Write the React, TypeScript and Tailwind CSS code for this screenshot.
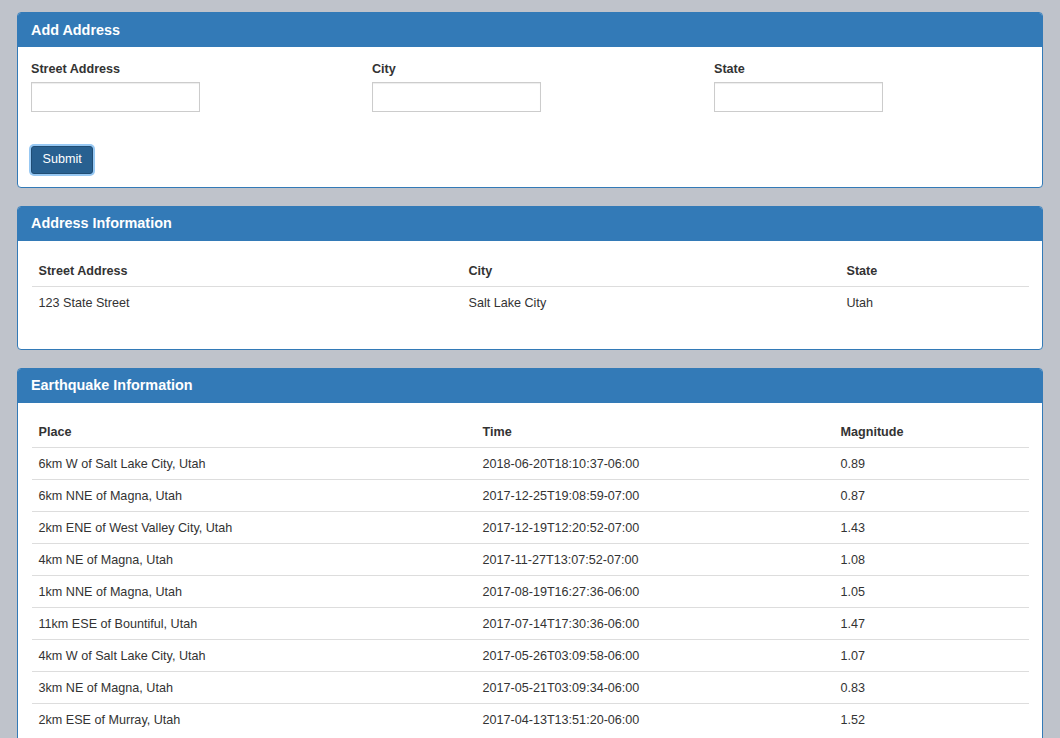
const addressCols = [
  { label: "Street Address", width: "w-[430px]" },
  { label: "City", width: "w-[378px]" },
  { label: "State", width: "" },
];

const quakeCols = [
  { label: "Place", width: "w-[444px]" },
  { label: "Time", width: "w-[358px]" },
  { label: "Magnitude", width: "" },
];

const quakes = [
  ["6km W of Salt Lake City, Utah", "2018-06-20T18:10:37-06:00", "0.89"],
  ["6km NNE of Magna, Utah", "2017-12-25T19:08:59-07:00", "0.87"],
  ["2km ENE of West Valley City, Utah", "2017-12-19T12:20:52-07:00", "1.43"],
  ["4km NE of Magna, Utah", "2017-11-27T13:07:52-07:00", "1.08"],
  ["1km NNE of Magna, Utah", "2017-08-19T16:27:36-06:00", "1.05"],
  ["11km ESE of Bountiful, Utah", "2017-07-14T17:30:36-06:00", "1.47"],
  ["4km W of Salt Lake City, Utah", "2017-05-26T03:09:58-06:00", "1.07"],
  ["3km NE of Magna, Utah", "2017-05-21T03:09:34-06:00", "0.83"],
  ["2km ESE of Murray, Utah", "2017-04-13T13:51:20-06:00", "1.52"],
];

const Panel = ({
  title,
  bodyClass = "p-[13px]",
  children,
}: {
  title: string;
  bodyClass?: string;
  children: React.ReactNode;
}) => (
  <div className="mb-[18px] rounded-[4px] border border-[#337ab7] bg-white">
    <div className="flex h-[34px] items-center rounded-t-[3px] bg-[#337ab7] px-[13px] pt-[1px] text-[14.4px] font-bold text-white">
      {title}
    </div>
    <div className={bodyClass}>{children}</div>
  </div>
);

const DataTable = ({
  cols,
  rows,
}: {
  cols: { label: string; width: string }[];
  rows: string[][];
}) => (
  <table className="mb-[18px] w-full border-collapse text-left text-[12.6px] leading-[18px] text-[#333]">
    <thead>
      <tr className="border-b border-[#ddd]">
        {cols.map((c) => (
          <th key={c.label} className={`px-[7px] py-[6.5px] font-bold ${c.width}`}>
            {c.label}
          </th>
        ))}
      </tr>
    </thead>
    <tbody>
      {rows.map((r, i) => (
        <tr key={i} className="border-b border-[#ddd] last:border-b-0">
          {r.map((cell, j) => (
            <td key={j} className="px-[7px] py-[6.5px]">
              {cell}
            </td>
          ))}
        </tr>
      ))}
    </tbody>
  </table>
);

export default function App() {
  return (
    <div
      className="min-h-screen bg-[#bfc3cb] px-[17px] pt-[12px] text-[#333]"
      style={{ fontFamily: '"Liberation Sans", Arial, sans-serif' }}
    >
      <Panel title="Add Address">
        <div className="grid grid-cols-[341px_342px_1fr]">
          {["Street Address", "City", "State"].map((l) => (
            <div key={l} className="mb-[13.5px] flex flex-col">
              <label className="mb-[4px] text-[12.6px] font-bold leading-[18px]">{l}</label>
              <input
                type="text"
                className="h-[30px] w-[169px] border border-[#ccc] bg-white px-2 text-[12.6px] shadow-[inset_0_1px_1px_rgba(0,0,0,0.075)] outline-none"
              />
            </div>
          ))}
        </div>
        <div className="pt-[20px]">
          <button className="h-[28px] rounded-[3px] border border-[#204d74] bg-[#286090] px-[10.5px] text-[12.6px] text-white shadow-[0_0_0_2px_#97c8f3]">
            Submit
          </button>
        </div>
      </Panel>

      <Panel title="Address Information" bodyClass="px-[13.5px] pt-[14.5px] pb-[12.5px]">
        <DataTable cols={addressCols} rows={[["123 State Street", "Salt Lake City", "Utah"]]} />
      </Panel>

      <Panel title="Earthquake Information" bodyClass="px-[13.5px] pt-[13.5px] pb-[12.5px]">
        <DataTable cols={quakeCols} rows={quakes} />
      </Panel>
    </div>
  );
}
